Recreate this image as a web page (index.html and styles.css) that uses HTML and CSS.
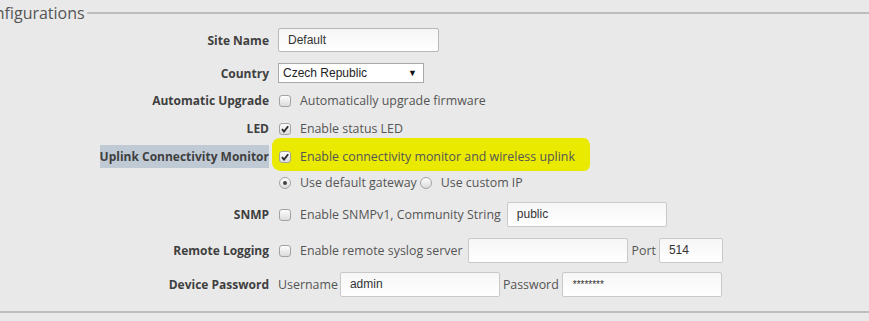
FILE: index.html
```html
<!DOCTYPE html>
<html lang="en">
<head>
    <meta charset="UTF-8">
    <title>Site Configurations</title>
    <link rel="stylesheet" href="styles.css">
</head>
<body>
    <div class="legend">
        <span class="legend-text">Configurations</span>
        <span class="legend-line"></span>
    </div>

    <div class="highlighter"></div>

    <div class="row row-site">
        <label class="label">Site Name</label>
        <div class="control"><span class="input w-site">Default</span></div>
    </div>

    <div class="row row-country">
        <label class="label">Country</label>
        <div class="control">
            <span class="select">Czech Republic<span class="arrow">&#9660;</span></span>
        </div>
    </div>

    <div class="row row-check">
        <label class="label">Automatic Upgrade</label>
        <div class="control"><span class="box"></span><span class="text">Automatically upgrade firmware</span></div>
    </div>

    <div class="row row-check">
        <label class="label">LED</label>
        <div class="control">
            <span class="box checked"><svg viewBox="0 0 10 10"><path d="M2 5.2 L4 7.6 L8.2 2.2" /></svg></span>
            <span class="text">Enable status LED</span>
        </div>
    </div>

    <div class="row row-check">
        <label class="label"><span class="selected">Uplink Connectivity Monitor</span></label>
        <div class="control">
            <span class="box checked"><svg viewBox="0 0 10 10"><path d="M2 5.2 L4 7.6 L8.2 2.2" /></svg></span>
            <span class="text">Enable connectivity monitor and wireless uplink</span>
        </div>
    </div>

    <div class="row row-radio">
        <label class="label"></label>
        <div class="control">
            <span class="radio on"></span><span class="text">Use default gateway</span>
            <span class="radio"></span><span class="text">Use custom IP</span>
        </div>
    </div>

    <div class="row row-field">
        <label class="label">SNMP</label>
        <div class="control">
            <span class="box"></span><span class="text">Enable SNMPv1, Community String</span>
            <span class="input w-long">public</span>
        </div>
    </div>

    <div class="row row-field">
        <label class="label">Remote Logging</label>
        <div class="control">
            <span class="box"></span><span class="text">Enable remote syslog server</span>
            <span class="input w-long"></span>
            <span class="text tight">Port</span>
            <span class="input w-port">514</span>
        </div>
    </div>

    <div class="row row-field">
        <label class="label">Device Password</label>
        <div class="control">
            <span class="text plain">Username</span>
            <span class="input w-long near">admin</span>
            <span class="text tight">Password</span>
            <span class="input w-long stars">********</span>
        </div>
    </div>

    <div class="bottom-line"></div>
</body>
</html>
```

FILE: styles.css
```css
body {
    margin: 0;
    background-color: #e9e9e9;
    font-family: "Open Sans", "DejaVu Sans", sans-serif;
    font-size: 12.4px;
    color: #555;
    overflow: hidden;
    position: relative;
}
.legend {
    display: flex;
    align-items: center;
    height: 26px;
}
.legend-text {
    font-size: 16px;
    color: #555;
    margin-left: -25px;
    padding-right: 2px;
}
.legend-line {
    flex: 1;
    border-top: 2px solid #bdbdbd;
}
.row {
    display: flex;
    align-items: center;
}
.row-site { margin-top: 2px; height: 24px; }
.row-country { margin-top: 11px; height: 20px; }
.row-check { margin-top: 7px; height: 21px; }
.row-radio { margin-top: 5px; height: 21px; }
.row-field { margin-top: 9px; height: 25px; }
.row-field + .row-field { margin-top: 11px; }
.row-field + .row-field + .row-field { margin-top: 9px; }
.label {
    width: 269px;
    text-align: right;
    font-weight: bold;
    font-size: 12px;
    color: #3f3f3f;
    flex-shrink: 0;
}
.selected {
    background-color: #bfcad4;
    padding: 3px 0 3px 0;
}
.control {
    display: flex;
    align-items: center;
    margin-left: 9px;
    position: relative;
    z-index: 1;
}
.text {
    margin-left: 9px;
    white-space: nowrap;
}
.text.plain { margin-left: 0; }
.text.tight { margin-left: 3px; margin-right: 3px; }
.input {
    box-sizing: border-box;
    height: 25px;
    border: 1px solid #c9c9c9;
    border-radius: 2px;
    background: linear-gradient(#f6f6f6, #ffffff);
    font-family: "Liberation Sans", Arial, sans-serif;
    font-size: 12px;
    color: #333;
    padding-left: 9px;
    line-height: 23px;
}
.w-site { width: 161px; height: 24px; line-height: 22px; border-color: #b9b9b9; }
.w-long { width: 160px; margin-left: 6px; }
.w-long.near { margin-left: 2px; }
.w-port { width: 64px; margin-left: 0; }
.text.tight + .input { margin-left: 0; }
.stars { font-size: 10px; padding-left: 10px; }
.select {
    box-sizing: border-box;
    display: flex;
    justify-content: space-between;
    align-items: center;
    width: 146px;
    height: 20px;
    border: 1px solid #a9a9a9;
    background: #fff;
    font-family: "Liberation Sans", Arial, sans-serif;
    font-size: 12px;
    color: #222;
    padding: 0 6px 0 4px;
}
.arrow {
    font-size: 9px;
    color: #111;
}
.box, .radio {
    box-sizing: border-box;
    width: 12px;
    height: 12px;
    border: 1px solid #a3a3a3;
    background: linear-gradient(#fdfdfd, #dcdcdc);
    flex-shrink: 0;
    display: inline-flex;
    align-items: center;
    justify-content: center;
}
.box { border-radius: 3px; margin-left: 1px; }
.box svg {
    width: 10px;
    height: 10px;
}
.box path {
    fill: none;
    stroke: #2a2a2a;
    stroke-width: 1.8;
}
.radio { border-radius: 50%; margin-left: 1px; }
.radio + .text + .radio { margin-left: 3px; }
.radio.on::after {
    content: "";
    width: 4px;
    height: 4px;
    border-radius: 50%;
    background: #444;
}
.highlighter {
    position: absolute;
    left: 272px;
    top: 138px;
    width: 318px;
    height: 33px;
    background: #eaea00;
    border-radius: 8px 6px 6px 10px / 8px 8px 6px 8px;
}
.bottom-line {
    margin-top: 14px;
    border-top: 2px solid #bdbdbd;
}
```
